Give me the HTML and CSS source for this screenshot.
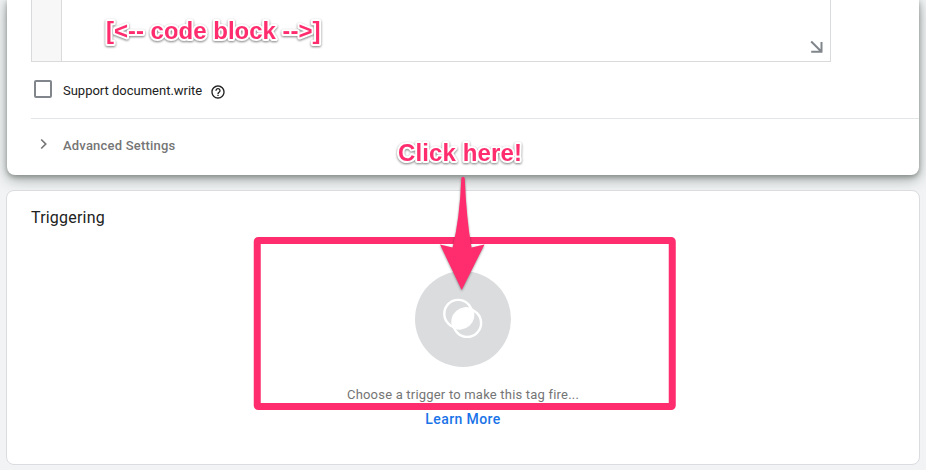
FILE: index.html
```
<!DOCTYPE html>
<html lang="en">
<head>
<meta charset="utf-8">
<title>Tag configuration</title>
<link rel="stylesheet" href="styles.css">
</head>
<body>
<main class="page">
  <section class="card config">
    <div class="editor">
      <div class="gutter"></div>
      <svg class="resize" width="14" height="14" viewBox="0 0 14 14"><path d="M1.200 1.500 11 11.300M11.500 2V11.700H1.200"/></svg>
    </div>
    <div class="option">
      <span class="checkbox"></span>
      <span class="option-label">Support document.write</span>
      <svg class="help" width="16" height="16" viewBox="0 0 24 24"><path d="M11 18h2v-2h-2v2zm1-16C6.48 2 2 6.48 2 12s4.480 10 10 10 10-4.480 10-10S17.520 2 12 2zm0 18c-4.410 0-8-3.590-8-8s3.590-8 8-8 8 3.590 8 8-3.590 8-8 8zm0-14c-2.210 0-4 1.790-4 4h2c0-1.100.9-2 2-2s2 .9 2 2c0 2-3 1.750-3 5h2c0-2.250 3-2.500 3-5 0-2.210-1.790-4-4-4z"/></svg>
    </div>
    <div class="advanced">
      <svg class="chevron" width="8" height="12" viewBox="0 0 8 12"><path d="M1.200 1.500 5.700 6 1.200 10.500"/></svg>
      <span>Advanced Settings</span>
    </div>
  </section>
  <section class="card triggering">
    <h2>Triggering</h2>
    <div class="empty">
      <svg class="trigger" width="96" height="96" viewBox="0 0 96 96">
        <circle class="disc" cx="48" cy="48" r="48"/>
        <circle class="ring" cx="43.200" cy="42.800" r="13.900"/>
        <circle class="ring" cx="52.200" cy="52" r="13.900"/>
        <path class="lens" d="M37.300 56.900A15.100 15.100 0 0 1 58.400 37.900A15.100 15.100 0 0 1 37.300 56.900Z"/>
      </svg>
      <p>Choose a trigger to make this tag fire...</p>
      <a class="learn">Learn More</a>
    </div>
  </section>
</main>
<svg class="notes" width="926" height="470" viewBox="0 0 926 470">
  <rect class="frame" x="257.250" y="240.500" width="415" height="166" rx="1"/>
  <path class="arrow" d="M461.300 178.500Q461.500 176.800 463 176.800T464.800 178.500Q466.300 218 471.500 247.500L484.500 244.500 461.700 290 440 244.500 452.600 247.500Q459.800 218 461.300 178.500Z"/>
  <text class="note" x="106" y="39" textLength="214.500">[&lt;-- code block --&gt;]</text>
  <text class="note" x="398" y="161" textLength="124">Click here!</text>
</svg>
</body>
</html>
```
FILE: styles.css
```
* { box-sizing: border-box; }
body {
  margin: 0;
  height: 470px;
  overflow: hidden;
  position: relative;
  background: #f1f3f4;
  font-family: Roboto, "Liberation Sans", sans-serif;
  color: #212121;
}
.page {
  height: 470px;
  padding: 0 6px;
  display: flex;
  flex-direction: column;
  gap: 15px;
}
.card { background: #fff; }
.config {
  height: 175px;
  flex: none;
  margin: 0 1px;
  padding-left: 24px;
  border-radius: 0 0 8px 8px;
  box-shadow: 0 4px 14px rgba(60, 70, 65, .45), 0 2px 5px rgba(60, 70, 65, .4);
}
.editor {
  width: 800px;
  height: 62px;
  display: flex;
  justify-content: space-between;
  align-items: flex-end;
  border: 1px solid #d9dadb;
  border-top: 0;
}
.gutter {
  width: 30px;
  height: 61px;
  background: #f7f7f7;
  border-right: 1px solid #d9dadb;
}
.resize { margin: 0 6px 7px 0; fill: none; stroke: #80868b; stroke-width: 2; }
.option {
  height: 57px;
  display: flex;
  align-items: center;
  border-bottom: 1px solid #e4e5e6;
  font-size: 13px;
}
.checkbox {
  width: 18px;
  height: 18px;
  margin: 0 11px 2px 3px;
  border: 2px solid #80868b;
  border-radius: 2px;
}
.option-label { width: 139px; letter-spacing: -.01px; white-space: nowrap; }
.help { margin: 3px 0 0 7.500px; fill: #212121; }
.advanced {
  height: 52px;
  display: flex;
  align-items: center;
  font-size: 13px;
  font-weight: 500;
  letter-spacing: .2px;
  color: #757575;
}
.chevron { margin: 0 15.500px 2px 8.500px; fill: none; stroke: #757575; stroke-width: 1.700; }
.triggering {
  height: 275px;
  flex: none;
  border: 1px solid #dadce0;
  border-radius: 8px;
}
h2 {
  margin: 17px 0 0 24px;
  font-size: 16px;
  line-height: 20px;
  font-weight: 400;
  letter-spacing: .2px;
}
.empty {
  display: flex;
  flex-direction: column;
  align-items: center;
  margin-top: 43px;
}
.trigger { display: block; }
.disc { fill: #dadcde; }
.ring { fill: none; stroke: #fff; stroke-width: 2.400; }
.lens { fill: #fff; }
.empty p {
  margin: 20px 0 0;
  font-size: 13px;
  line-height: 16px;
  letter-spacing: .2px;
  color: #757575;
}
.learn {
  margin-top: 7px;
  font-size: 14px;
  line-height: 18px;
  font-weight: 500;
  letter-spacing: .4px;
  color: #1a73e8;
}
.notes { position: absolute; left: 0; top: 0; }
.frame { fill: none; stroke: #ff2d6e; stroke-width: 7; stroke-linejoin: round; }
.arrow { fill: #ff2d6e; filter: drop-shadow(0 1px 1px rgba(0, 0, 0, .4)); }
.note {
  font-family: "Liberation Sans", sans-serif;
  font-size: 24px;
  font-weight: 700;
  fill: #ff2d6e;
  stroke: #fff;
  stroke-width: 4px;
  stroke-linejoin: round;
  paint-order: stroke;
  filter: drop-shadow(0 1px 1px rgba(0, 0, 0, .5));
}
```
